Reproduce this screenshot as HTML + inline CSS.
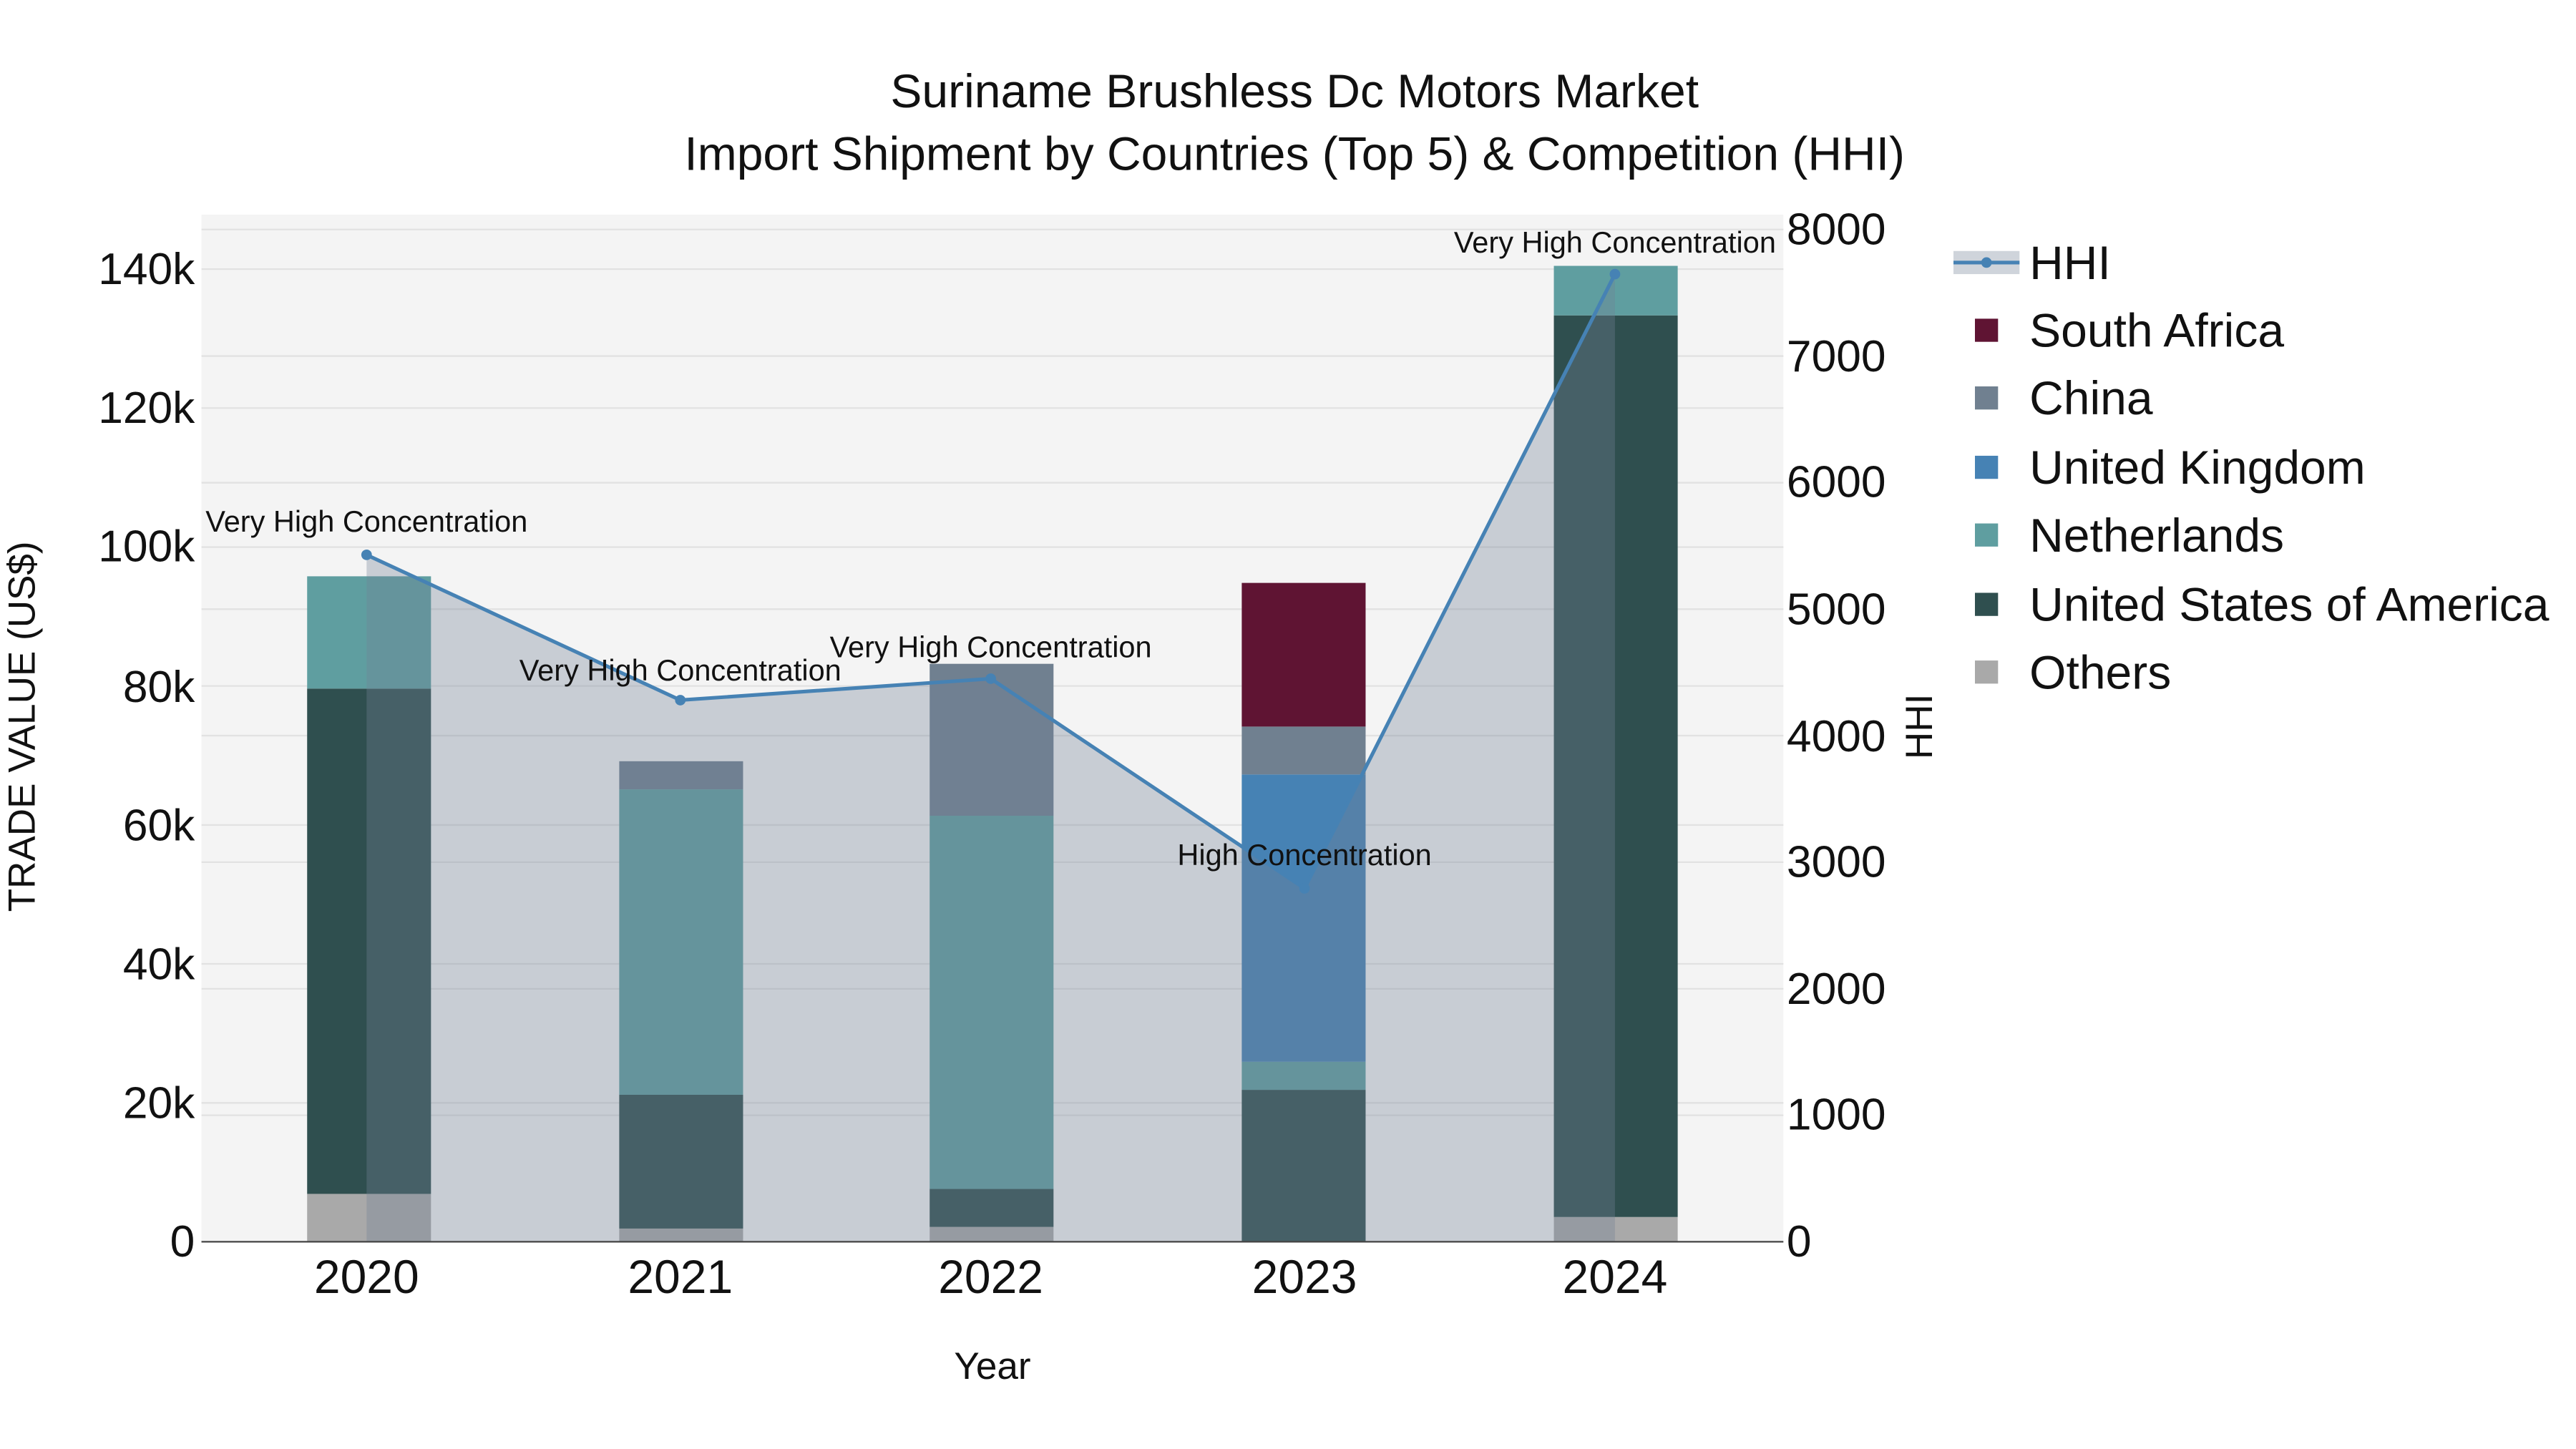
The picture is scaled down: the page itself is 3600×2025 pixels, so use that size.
<!DOCTYPE html>
<html><head><meta charset="utf-8"><style>html,body{margin:0;padding:0;background:#fff}svg{display:block}text{font-family:"Liberation Sans",sans-serif}</style></head><body>
<svg width="3600" height="2025" viewBox="0 0 1560 877.5" xmlns="http://www.w3.org/2000/svg">
<rect x="0" y="0" width="1560" height="877.5" fill="#fff"/>
<rect x="122" y="130" width="958" height="622" fill="#f4f4f4"/>
<g stroke="#e2e2e2" stroke-width="1">
<line x1="122" x2="1080" y1="667.9" y2="667.9"/><line x1="122" x2="1080" y1="583.7" y2="583.7"/><line x1="122" x2="1080" y1="499.6" y2="499.6"/><line x1="122" x2="1080" y1="415.4" y2="415.4"/><line x1="122" x2="1080" y1="331.3" y2="331.3"/><line x1="122" x2="1080" y1="247.1" y2="247.1"/><line x1="122" x2="1080" y1="163" y2="163"/>
<line x1="122" x2="1080" y1="675.4" y2="675.4"/><line x1="122" x2="1080" y1="598.8" y2="598.8"/><line x1="122" x2="1080" y1="522.1" y2="522.1"/><line x1="122" x2="1080" y1="445.5" y2="445.5"/><line x1="122" x2="1080" y1="368.9" y2="368.9"/><line x1="122" x2="1080" y1="292.3" y2="292.3"/><line x1="122" x2="1080" y1="215.6" y2="215.6"/><line x1="122" x2="1080" y1="139" y2="139"/>
</g>
<g>
<rect x="186" y="723" width="75" height="29" fill="#a9a9a9"/><rect x="186" y="417" width="75" height="306" fill="#2f4f4f"/><rect x="186" y="349" width="75" height="68" fill="#5f9ea0"/>
<rect x="375" y="744" width="75" height="8" fill="#a9a9a9"/><rect x="375" y="663" width="75" height="81" fill="#2f4f4f"/><rect x="375" y="478" width="75" height="185" fill="#5f9ea0"/><rect x="375" y="461" width="75" height="17" fill="#708090"/>
<rect x="563" y="743" width="75" height="9" fill="#a9a9a9"/><rect x="563" y="720" width="75" height="23" fill="#2f4f4f"/><rect x="563" y="494" width="75" height="226" fill="#5f9ea0"/><rect x="563" y="402" width="75" height="92" fill="#708090"/>
<rect x="752" y="660" width="75" height="92" fill="#2f4f4f"/><rect x="752" y="643" width="75" height="17" fill="#5f9ea0"/><rect x="752" y="469" width="75" height="174" fill="#4682b4"/><rect x="752" y="440" width="75" height="29" fill="#708090"/><rect x="752" y="353" width="75" height="87" fill="#5f1433"/>
<rect x="941" y="737" width="75" height="15" fill="#a9a9a9"/><rect x="941" y="191" width="75" height="546" fill="#2f4f4f"/><rect x="941" y="161" width="75" height="30" fill="#5f9ea0"/>
</g>
<polygon points="222,752 222,336 412,424 600,411 790,538 978,166 978,752" fill="rgba(115,130,150,0.34)"/>
<polyline points="222,336 412,424 600,411 790,538 978,166" fill="none" stroke="#4682b4" stroke-width="2.2"/>
<g fill="#4682b4"><circle cx="222" cy="336" r="3.2"/><circle cx="412" cy="424" r="3.2"/><circle cx="600" cy="411" r="3.2"/><circle cx="790" cy="538" r="3.2"/><circle cx="978" cy="166" r="3.2"/></g>
<line x1="122" x2="1080" y1="752" y2="752" stroke="#444" stroke-width="1"/>
<g font-size="18" fill="#111" text-anchor="middle">
<text x="222" y="322">Very High Concentration</text><text x="412" y="412">Very High Concentration</text><text x="600" y="398">Very High Concentration</text><text x="790" y="524">High Concentration</text><text x="978" y="153">Very High Concentration</text>
</g>
<g font-size="28.6" fill="#111" text-anchor="middle">
<text x="784" y="65">Suriname Brushless Dc Motors Market</text>
<text x="784" y="103">Import Shipment by Countries (Top 5) &amp; Competition (HHI)</text>
</g>
<g font-size="27" fill="#111" text-anchor="end">
<text x="118" y="761">0</text><text x="118" y="677">20k</text><text x="118" y="593">40k</text><text x="118" y="509">60k</text><text x="118" y="425">80k</text><text x="118" y="340">100k</text><text x="118" y="256">120k</text><text x="118" y="172">140k</text>
</g>
<g font-size="27" fill="#111" text-anchor="start">
<text x="1082" y="761">0</text><text x="1082" y="684">1000</text><text x="1082" y="608">2000</text><text x="1082" y="531">3000</text><text x="1082" y="455">4000</text><text x="1082" y="378">5000</text><text x="1082" y="301">6000</text><text x="1082" y="225">7000</text><text x="1082" y="148">8000</text>
</g>
<g font-size="28.6" fill="#111" text-anchor="middle">
<text x="222" y="783">2020</text><text x="412" y="783">2021</text><text x="600" y="783">2022</text><text x="790" y="783">2023</text><text x="978" y="783">2024</text>
</g>
<text x="601" y="835" font-size="23" fill="#111" text-anchor="middle">Year</text>
<text transform="translate(21,440) rotate(-90)" font-size="23" fill="#111" text-anchor="middle">TRADE VALUE (US$)</text>
<text transform="translate(1170,440) rotate(-90)" font-size="23" fill="#111" text-anchor="middle">HHI</text>
<rect x="1183" y="152" width="40" height="14" fill="rgba(115,130,150,0.34)"/>
<line x1="1183" x2="1223" y1="159" y2="159" stroke="#4682b4" stroke-width="2.2"/><circle cx="1203" cy="159" r="3.2" fill="#4682b4"/>
<g>
<rect x="1196" y="193" width="14" height="14" fill="#5f1433"/><rect x="1196" y="234" width="14" height="14" fill="#708090"/><rect x="1196" y="276" width="14" height="14" fill="#4682b4"/><rect x="1196" y="317" width="14" height="14" fill="#5f9ea0"/><rect x="1196" y="359" width="14" height="14" fill="#2f4f4f"/><rect x="1196" y="400" width="14" height="14" fill="#a9a9a9"/>
</g>
<g font-size="28.6" fill="#111">
<text x="1229" y="169">HHI</text><text x="1229" y="210">South Africa</text><text x="1229" y="251">China</text><text x="1229" y="293">United Kingdom</text><text x="1229" y="334">Netherlands</text><text x="1229" y="376">United States of America</text><text x="1229" y="417">Others</text>
</g>
</svg>
</body></html>
